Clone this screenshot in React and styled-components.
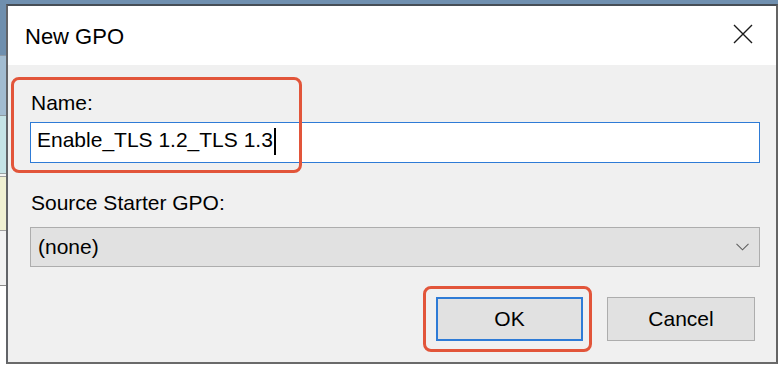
import React from "react";
import styled, { createGlobalStyle } from "styled-components";

const Global = createGlobalStyle`
  html, body { margin: 0; padding: 0; background: #ffffff; }
  body { font-family: "Liberation Sans", Arial, sans-serif; color: #000; }
  * { box-sizing: border-box; }
`;

const Page = styled.div`
  display: flex;
  width: 778px;
  height: 368px;
  overflow: hidden;
  background: #ffffff;
`;

const LeftStrip = styled.div`
  display: flex;
  flex-direction: column;
  width: 6px;
  flex: none;
`;

const Segment = styled.div`
  height: ${(p) => p.$h}px;
  flex: none;
  background: ${(p) => p.$bg};
  border-bottom: ${(p) => (p.$line ? `1px solid ${p.$line}` : "none")};
`;

const MainColumn = styled.div`
  display: flex;
  flex-direction: column;
  flex: 1;
`;

const TopBand = styled.div`
  height: 4px;
  background: #7090b0;
  flex: none;
`;

const Dialog = styled.div`
  width: 772px;
  height: 360px;
  display: flex;
  flex-direction: column;
  border-top: 2px solid #474e56;
  border-left: 2px solid #626468;
  border-right: 2px solid #646464;
  border-bottom: 2px solid #6a6a6a;
`;

const TitleBar = styled.div`
  height: 59px;
  flex: none;
  background: #ffffff;
  display: flex;
  align-items: flex-start;
  justify-content: space-between;
  padding: 18px 23px 0 17px;
`;

const Title = styled.div`
  font-size: 22px;
  line-height: 24px;
  margin-top: 1px;
`;

const CloseButton = styled.div`
  width: 20px;
  height: 20px;
  display: flex;
`;

const Body = styled.div`
  position: relative;
  flex: 1;
  background: #f0f0f0;
  display: flex;
  flex-direction: column;
  padding: 26px 16px 0 22px;
`;

const Label = styled.div`
  font-size: 21px;
  line-height: 24px;
  margin-top: ${(p) => p.$mt || 0}px;
  padding-left: 1px;
`;

const TextBox = styled.div`
  margin-top: 7px;
  height: 41px;
  background: #ffffff;
  border: 1px solid #2e7bd6;
  display: flex;
  align-items: flex-start;
  padding: 5px 6px 0;
  font-size: 21px;
  line-height: 24px;
`;

const Caret = styled.span`
  display: inline-block;
  width: 2px;
  height: 27px;
  background: #000;
  margin-left: 1px;
`;

const Select = styled.div`
  margin-top: 12px;
  height: 40px;
  background: #e1e1e1;
  border: 1px solid #adadad;
  display: flex;
  align-items: center;
  justify-content: space-between;
  padding: 0 10px 0 7px;
  font-size: 21px;
  line-height: 24px;
`;

const ButtonRow = styled.div`
  margin-top: 30px;
  display: flex;
  justify-content: flex-end;
  gap: 24px;
  padding-right: 5px;
`;

const Button = styled.div`
  width: ${(p) => p.$w}px;
  height: 44px;
  background: #e1e1e1;
  border: ${(p) => (p.$primary ? "2px solid #2e7bd6" : "1px solid #adadad")};
  display: flex;
  align-items: center;
  justify-content: center;
  font-size: 21px;
  line-height: 24px;
`;

const Annotation = styled.div`
  position: absolute;
  left: ${(p) => p.$x}px;
  top: ${(p) => p.$y}px;
  width: ${(p) => p.$w}px;
  height: ${(p) => p.$h}px;
  border: 3px solid #e2553a;
  border-radius: 8px;
  pointer-events: none;
`;

const segments = [
  { h: 56, bg: "#6f8fae", line: "#8c9aa8" },
  { h: 60, bg: "#a2bcd1", line: "#8e9aa2" },
  { h: 58, bg: "#c5e3e6", line: "#9aa4a4" },
  { h: 3, bg: "#f4f4f4", line: "#a0a0a0" },
  { h: 54, bg: "#f0f0d2", line: "#a0a0a0" },
  { h: 55, bg: "#f2f2f2", line: "#8c8c8c" },
  { h: 80, bg: "#ffffff" },
];

export default function App() {
  return (
    <>
      <Global />
      <Page>
        <LeftStrip>
          {segments.map((s, i) => (
            <Segment key={i} $h={s.h} $bg={s.bg} $line={s.line} />
          ))}
        </LeftStrip>
        <MainColumn>
          <TopBand />
          <Dialog>
            <TitleBar>
              <Title>New GPO</Title>
              <CloseButton>
                <svg width="20" height="20" viewBox="0 0 20 20">
                  <path d="M1 1 L19 19 M19 1 L1 19" stroke="#1a1a1a" strokeWidth="1.4" fill="none" />
                </svg>
              </CloseButton>
            </TitleBar>
            <Body>
              <Label>Name:</Label>
              <TextBox>
                <span>Enable_TLS 1.2_TLS 1.3</span>
                <Caret />
              </TextBox>
              <Label $mt={28}>Source Starter GPO:</Label>
              <Select>
                <span>(none)</span>
                <svg width="13" height="8" viewBox="0 0 13 8">
                  <polyline points="0.5,0.8 6.5,6.8 12.5,0.8" stroke="#606060" strokeWidth="1.1" fill="none" />
                </svg>
              </Select>
              <ButtonRow>
                <Button $w={147} $primary>OK</Button>
                <Button $w={148}>Cancel</Button>
              </ButtonRow>
              <Annotation $x={3} $y={12} $w={291} $h={96} />
              <Annotation $x={415} $y={221} $w={169} $h={66} />
            </Body>
          </Dialog>
        </MainColumn>
      </Page>
    </>
  );
}
